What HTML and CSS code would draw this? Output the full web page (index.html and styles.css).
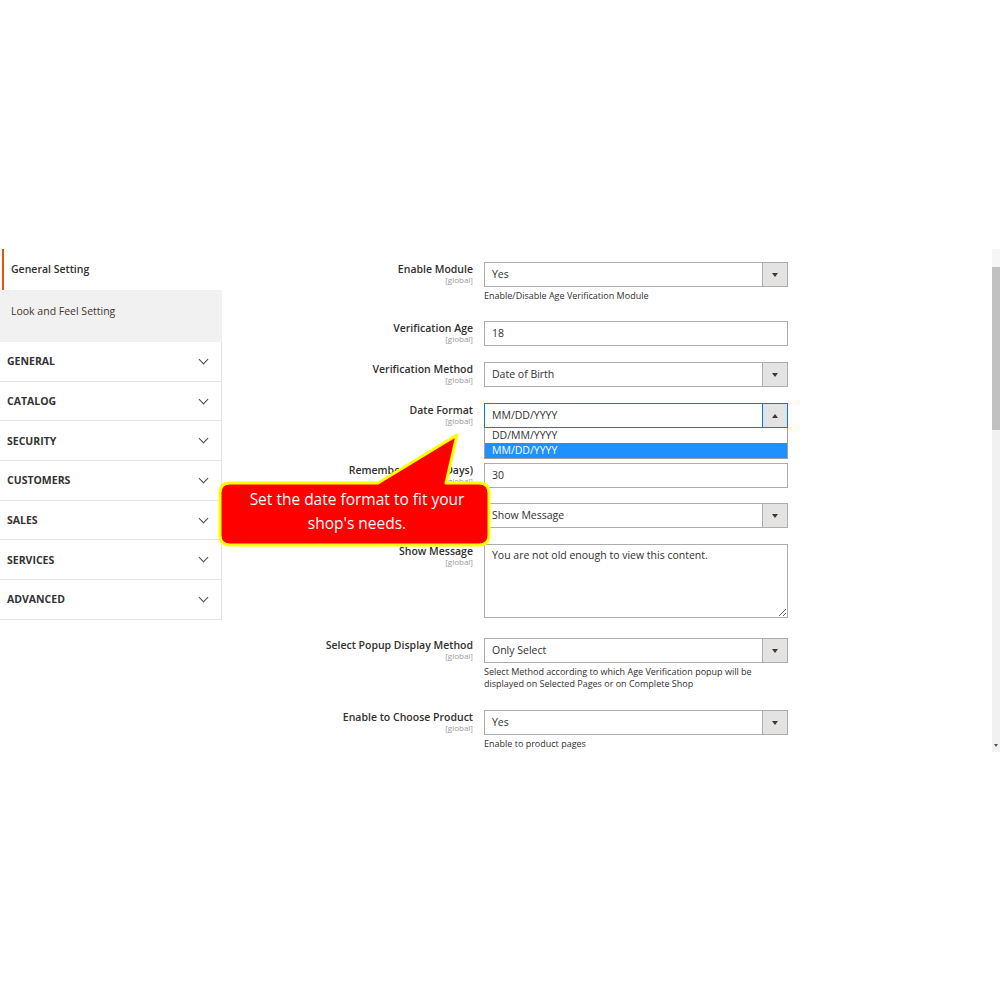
FILE: index.html
```html
<!DOCTYPE html>
<html>
<head>
    <title>Age Verification - Configuration</title>
    <link rel="stylesheet" href="styles.css">
</head>
<body>

    <div class="shot">
        <div class="sidebar">
            <div class="tab tab-active">General Setting</div>
            <div class="tab tab-grey">Look and Feel Setting</div>
            <div class="group">General <span class="chevron"></span></div>
            <div class="group">Catalog <span class="chevron"></span></div>
            <div class="group">Security <span class="chevron"></span></div>
            <div class="group">Customers <span class="chevron"></span></div>
            <div class="group">Sales <span class="chevron"></span></div>
            <div class="group">Services <span class="chevron"></span></div>
            <div class="group">Advanced <span class="chevron"></span></div>
        </div>

        <div class="form">
            <div class="row">
                <div class="label">Enable Module<span class="scope">[global]</span></div>
                <div class="control">
                    <div class="select">Yes<span class="arrow"></span></div>
                    <div class="note">Enable/Disable Age Verification Module</div>
                </div>
            </div>

            <div class="row">
                <div class="label">Verification Age<span class="scope">[global]</span></div>
                <div class="control">
                    <div class="input">18</div>
                </div>
            </div>

            <div class="row">
                <div class="label">Verification Method<span class="scope">[global]</span></div>
                <div class="control">
                    <div class="select">Date of Birth<span class="arrow"></span></div>
                </div>
            </div>

            <div class="row row-open">
                <div class="label">Date Format<span class="scope">[global]</span></div>
                <div class="control">
                    <div class="select select-focus">MM/DD/YYYY<span class="arrow arrow-up"></span></div>
                    <div class="options">
                        <div class="option">DD/MM/YYYY</div>
                        <div class="option option-selected">MM/DD/YYYY</div>
                    </div>
                </div>
            </div>

            <div class="row row-tight">
                <div class="label">Remember Result (Days)<span class="scope">[global]</span></div>
                <div class="control">
                    <div class="input">30</div>
                </div>
            </div>

            <div class="row">
                <div class="label">Underage Action<span class="scope">[global]</span></div>
                <div class="control">
                    <div class="select">Show Message<span class="arrow"></span></div>
                </div>
            </div>

            <div class="row row-text">
                <div class="label">Show Message<span class="scope">[global]</span></div>
                <div class="control">
                    <textarea class="textarea">You are not old enough to view this content.</textarea>
                </div>
            </div>

            <div class="row">
                <div class="label">Select Popup Display Method<span class="scope">[global]</span></div>
                <div class="control">
                    <div class="select">Only Select<span class="arrow"></span></div>
                    <div class="note note-long">Select Method according to which Age Verification popup will be displayed on Selected Pages or on Complete Shop</div>
                </div>
            </div>

            <div class="row">
                <div class="label">Enable to Choose Product<span class="scope">[global]</span></div>
                <div class="control">
                    <div class="select">Yes<span class="arrow"></span></div>
                    <div class="note">Enable to product pages</div>
                </div>
            </div>
        </div>

        <div class="scrollbar">
            <div class="scroll-up"></div>
            <div class="scroll-thumb"></div>
            <div class="scroll-track"></div>
            <div class="scroll-down"></div>
        </div>

        <div class="callout">
            <svg class="callout-shape" width="280" height="120" viewBox="215 430 280 120">
                <path d="M230 483 H378 L457 435 L446 483 H479 Q489 483 489 493 V535 Q489 545 479 545 H230 Q220 545 220 535 V493 Q220 483 230 483 Z"
                      fill="#ff0000" stroke="#ffff00" stroke-width="3" stroke-linejoin="round"/>
            </svg>
            <div class="callout-text">Set the date format to fit your<br>shop's needs.</div>
        </div>
    </div>

</body>
</html>
```

FILE: styles.css
```css
body {
    margin: 0;
    background: #ffffff;
    font-family: "Open Sans", "Liberation Sans", sans-serif;
    color: #303030;
}

.shot {
    position: relative;
    display: flex;
    margin-top: 249px;
    height: 503px;
    overflow: hidden;
}

/* left navigation */
.sidebar {
    width: 222px;
    flex-shrink: 0;
}

.tab {
    font-size: 10.5px;
    padding-left: 11px;
}

.tab-active {
    height: 41px;
    line-height: 40px;
    margin-left: 2px;
    padding-left: 7px;
    border-left: 2px solid #eb5202;
    font-weight: 600;
    color: #303030;
}

.tab-grey {
    height: 52px;
    line-height: 42px;
    background: #f1f1f1;
    color: #41362f;
}

.group {
    display: flex;
    justify-content: space-between;
    align-items: center;
    height: 38.7px;
    padding: 0 14px 0 7px;
    border-bottom: 1px solid #e3e3e3;
    border-right: 1px solid #e3e3e3;
    font-size: 10.5px;
    font-weight: 700;
    text-transform: uppercase;
    color: #333333;
}

.chevron {
    width: 6px;
    height: 6px;
    border-right: 1.3px solid #514943;
    border-bottom: 1.3px solid #514943;
    transform: rotate(45deg);
    margin-top: -4px;
}

/* form */
.form {
    flex: 1;
    padding-top: 13px;
}

.row {
    display: grid;
    grid-template-columns: 251px 304px;
    column-gap: 11px;
    margin-bottom: 16px;
}

.row-open {
    margin-bottom: 35px;
}

.row-tight {
    margin-bottom: 15px;
}

.row-text {
    margin-bottom: 20px;
}

.label {
    text-align: right;
    font-size: 10.5px;
    font-weight: 600;
    line-height: 14px;
    color: #303030;
}

.scope {
    display: block;
    font-size: 8px;
    font-weight: 400;
    line-height: 10px;
    margin-top: -1px;
    color: #999999;
}

.control {
    position: relative;
}

.input,
.select {
    position: relative;
    height: 23px;
    line-height: 23px;
    padding-left: 7px;
    border: 1px solid #adadad;
    background: #ffffff;
    font-size: 10.5px;
    color: #303030;
}

.select-focus {
    border-color: #007bdb;
}

.arrow {
    position: absolute;
    top: 0;
    right: 0;
    width: 24px;
    height: 23px;
    background: #e3e3e3;
    border-left: 1px solid #adadad;
}

.arrow::after {
    content: "";
    position: absolute;
    left: 9px;
    top: 10px;
    border-left: 3px solid transparent;
    border-right: 3px solid transparent;
    border-top: 4px solid #41362f;
}

.select-focus .arrow {
    border-left-color: #007bdb;
}

.arrow-up::after {
    border-top: 0;
    border-bottom: 4px solid #41362f;
}

.options {
    position: absolute;
    top: 25px;
    left: 0;
    width: 302px;
    border: 1px solid #a0a0a0;
    border-top: 0;
    background: #ffffff;
    z-index: 2;
}

.option {
    height: 15px;
    line-height: 15px;
    padding-left: 7px;
    font-size: 10.5px;
    color: #303030;
}

.option-selected {
    background: #1e90ff;
    color: #ffffff;
}

.note {
    margin-top: 3px;
    padding-bottom: 3px;
    padding-right: 30px;
    font-size: 9px;
    line-height: 12px;
    color: #303030;
}

.note-long {
    padding-bottom: 4px;
}

.textarea {
    display: block;
    box-sizing: border-box;
    width: 304px;
    height: 74px;
    margin: 0;
    padding: 3px 7px;
    border: 1px solid #adadad;
    border-radius: 0;
    font-family: "Open Sans", "Liberation Sans", sans-serif;
    font-size: 10.5px;
    line-height: 14px;
    color: #303030;
}

/* scrollbar of the captured window */
.scrollbar {
    width: 8px;
    margin-left: auto;
    display: flex;
    flex-direction: column;
    background: #f1f1f1;
}

.scroll-up {
    height: 18px;
    background: #f6f6f6;
}

.scroll-thumb {
    height: 163px;
    background: #c1c1c1;
}

.scroll-track {
    flex: 1;
}

.scroll-down {
    height: 10px;
    position: relative;
}

.scroll-down::after {
    content: "";
    position: absolute;
    left: 2px;
    top: 2px;
    border-left: 2px solid transparent;
    border-right: 2px solid transparent;
    border-top: 3px solid #505050;
}

/* annotation bubble */
.callout {
    position: absolute;
    left: 215px;
    top: 181px;
    width: 280px;
    height: 120px;
    z-index: 5;
}

.callout-shape {
    display: block;
}

.callout-text {
    position: absolute;
    left: 5px;
    top: 57px;
    width: 274px;
    text-align: center;
    font-size: 15.5px;
    line-height: 24px;
    color: #ffffff;
}
```
